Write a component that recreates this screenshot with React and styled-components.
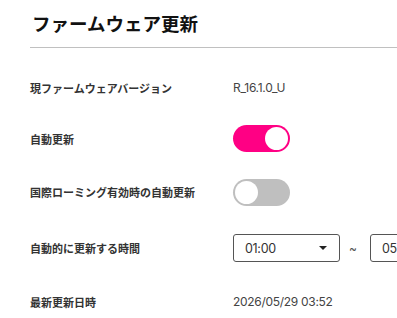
import React from 'react';
import styled, { createGlobalStyle } from 'styled-components';

const GlobalStyle = createGlobalStyle`
  html, body {
    margin: 0;
    padding: 0;
    background: #ffffff;
  }
  body {
    font-family: "Noto Sans CJK JP", "Noto Sans", sans-serif;
    color: #333333;
    overflow: hidden;
  }
`;

const StyledPage = styled.div`
  width: 397px;
  height: 318px;
  padding-left: 30px;
  box-sizing: border-box;
  overflow: hidden;
`;

const StyledHeading = styled.h1`
  margin: 0;
  padding: 9px 0 10px 2px;
  font-size: 18.5px;
  line-height: 28px;
  font-weight: 700;
  color: #111111;
  border-bottom: 1px solid #c0c0c0;
`;

const StyledList = styled.div`
  display: flex;
  flex-direction: column;
  padding-top: 14px;
`;

const StyledRow = styled.div`
  display: grid;
  grid-template-columns: 203px 1fr;
  align-items: center;
  height: ${({ tall }) => (tall ? '56px' : '51px')};
`;

const StyledLabel = styled.span`
  font-size: 11px;
  font-weight: 700;
  color: #333333;
  white-space: nowrap;
`;

const StyledValue = styled.span`
  font-family: "Inter", "Noto Sans", sans-serif;
  font-size: 12px;
  color: #444444;
  letter-spacing: -0.3px;
  white-space: nowrap;
`;

const StyledSwitch = styled.span`
  display: flex;
  justify-content: ${({ isOn }) => (isOn ? 'flex-end' : 'flex-start')};
  align-items: center;
  width: 57px;
  height: 27px;
  padding: 2px;
  box-sizing: border-box;
  border-radius: 14px;
  background: ${({ isOn }) => (isOn ? '#ff0084' : '#bfbfbf')};
`;

const StyledKnob = styled.span`
  width: 23px;
  height: 23px;
  border-radius: 50%;
  background: #ffffff;
`;

const StyledTimeRange = styled.div`
  display: flex;
  align-items: center;
`;

const StyledSelect = styled.div`
  display: flex;
  align-items: center;
  justify-content: space-between;
  flex-shrink: 0;
  width: 107px;
  height: 28px;
  box-sizing: border-box;
  padding: 0 12px 0 11px;
  border: 1px solid #555555;
  border-radius: 3px;
  font-family: "Inter", "Noto Sans", sans-serif;
  font-size: 12.5px;
  color: #333333;
  letter-spacing: -0.3px;
`;

const StyledArrow = styled.span`
  width: 0;
  height: 0;
  border-left: 4px solid transparent;
  border-right: 4px solid transparent;
  border-top: 4px solid #222222;
`;

const StyledTilde = styled.span`
  width: 30px;
  padding-right: 4px;
  box-sizing: border-box;
  text-align: center;
  font-family: "Inter", sans-serif;
  font-size: 12px;
  color: #555555;
`;

const Switch = ({ isOn }) => (
  <StyledSwitch isOn={isOn}>
    <StyledKnob />
  </StyledSwitch>
);

const Select = ({ value }) => (
  <StyledSelect>
    <span>{value}</span>
    <StyledArrow />
  </StyledSelect>
);

const App = () => (
  <>
    <GlobalStyle />
    <StyledPage>
      <StyledHeading>ファームウェア更新</StyledHeading>
      <StyledList>
        <StyledRow>
          <StyledLabel>現ファームウェアバージョン</StyledLabel>
          <StyledValue>R_16.1.0_U</StyledValue>
        </StyledRow>
        <StyledRow>
          <StyledLabel>自動更新</StyledLabel>
          <Switch isOn />
        </StyledRow>
        <StyledRow tall>
          <StyledLabel>国際ローミング有効時の自動更新</StyledLabel>
          <Switch isOn={false} />
        </StyledRow>
        <StyledRow tall>
          <StyledLabel>自動的に更新する時間</StyledLabel>
          <StyledTimeRange>
            <Select value="01:00" />
            <StyledTilde>~</StyledTilde>
            <Select value="05:00" />
          </StyledTimeRange>
        </StyledRow>
        <StyledRow>
          <StyledLabel>最新更新日時</StyledLabel>
          <StyledValue>2026/05/29 03:52</StyledValue>
        </StyledRow>
      </StyledList>
    </StyledPage>
  </>
);

export default App;
